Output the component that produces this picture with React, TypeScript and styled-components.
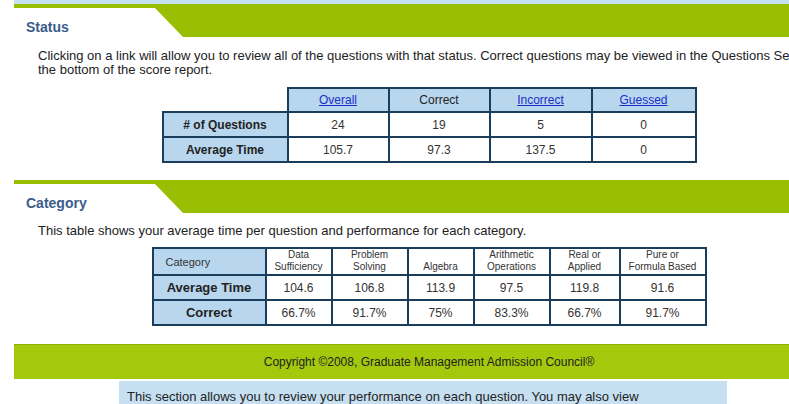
import React from "react";
import styled, { createGlobalStyle } from "styled-components";

const GREEN = "#99bf05";
const NAVY = "#1b3d5c";
const LIGHT = "#b8d6ee";

const Global = createGlobalStyle`
  html, body { margin: 0; padding: 0; background: #fff; overflow: hidden; }
  body { font-family: "Liberation Sans", Arial, sans-serif; color: #222; }
`;

const Page = styled.div`
  width: 830px;
  margin-left: 14px;
  display: flex;
  flex-direction: column;
`;

const TopStrip = styled.div`
  height: 4px;
  background: #c6e0f1;
`;

const SectionHeader = styled.div<{ $mt?: number }>`
  display: flex;
  height: 29px;
  border-top: 4px solid ${GREEN};
  margin-top: ${(p) => p.$mt ?? 0}px;
`;

const Title = styled.h2`
  width: 141px;
  margin: 0;
  padding: 11px 0 0 12px;
  box-sizing: border-box;
  font-size: 14px;
  font-weight: bold;
  color: #3b5b8c;
  line-height: 16px;
`;

const Wedge = styled.div`
  flex: 1;
  background: ${GREEN};
  clip-path: polygon(0 0, 100% 0, 100% 100%, 28px 100%);
`;

const Para = styled.p<{ $mt: number }>`
  margin: ${(p) => p.$mt}px 0 0 24px;
  font-size: 13px;
  line-height: 14px;
  color: #222;
`;

const Table = styled.table<{ $mt: number }>`
  border-collapse: collapse;
  table-layout: fixed;
  margin: ${(p) => p.$mt}px auto 0;
  font-size: 12px;
  color: #333;
`;

const Cell = styled.td<{ $bg?: string; $bold?: boolean; $none?: boolean; $h?: number }>`
  border: ${(p) => (p.$none ? "none" : `2px solid ${NAVY}`)};
  background: ${(p) => p.$bg ?? "#fff"};
  font-weight: ${(p) => (p.$bold ? "bold" : "normal")};
  text-align: center;
  vertical-align: middle;
  height: ${(p) => p.$h ?? 23}px;
  padding: 0;
  color: ${(p) => (p.$bold ? "#222" : "#333")};
`;

const Link = styled.a`
  color: #1d2fc9;
  text-decoration: underline;
`;

const CatHead = styled.td<{ $left?: boolean; $bg?: string }>`
  border: 2px solid ${NAVY};
  background: ${(p) => p.$bg ?? "#fff"};
  font-size: ${(p) => (p.$left ? 11 : 10)}px;
  line-height: 12px;
  text-align: ${(p) => (p.$left ? "left" : "center")};
  padding: ${(p) => (p.$left ? "0 0 0 12px" : "0 0 1px")};
  vertical-align: ${(p) => (p.$left ? "middle" : "bottom")};
  height: 22px;
  color: #333;
`;

const RowLabel = styled.td`
  border: 2px solid ${NAVY};
  background: ${LIGHT};
  font-size: 13px;
  font-weight: bold;
  text-align: center;
  height: 23px;
  padding: 0;
  color: #222;
`;

const Val = styled.td`
  border: 2px solid ${NAVY};
  background: #fff;
  font-size: 12px;
  text-align: center;
  height: 23px;
  padding: 0;
  color: #333;
`;

const Footer = styled.div`
  margin-top: 18px;
  height: 34px;
  background: #a4c80c;
  border-top: 1px solid #8fb000;
  display: flex;
  align-items: center;
  justify-content: center;
  font-size: 12px;
  color: #222;
`;

const Note = styled.div`
  margin: 2px 0 0 105px;
  width: 608px;
  background: #c6e0f1;
  font-size: 13px;
  padding: 8px 8px 10px;
  box-sizing: border-box;
  color: #222;
`;

const statusCols = [125, 101, 101, 102, 104];
const catCols = [113, 66, 76, 66, 76, 70, 86];

const catHeads = [
  ["Data", "Sufficiency"],
  ["Problem", "Solving"],
  ["Algebra"],
  ["Arithmetic", "Operations"],
  ["Real or", "Applied"],
  ["Pure or", "Formula Based"],
];

export default function App() {
  return (
    <>
      <Global />
      <Page>
        <TopStrip />
        <SectionHeader>
          <Title>Status</Title>
          <Wedge />
        </SectionHeader>
        <Para $mt={12}>
          Clicking on a link will allow you to review all of the questions with that status. Correct questions may be viewed in the Questions Section at
          the bottom of the score report.
        </Para>
        <Table $mt={10}>
          <colgroup>
            {statusCols.map((w, i) => (
              <col key={i} style={{ width: w }} />
            ))}
          </colgroup>
          <tbody>
            <tr>
              <Cell $none $bg="#fff" $h={22} />
              <Cell $bg={LIGHT} $h={22}><Link href="#">Overall</Link></Cell>
              <Cell $bg={LIGHT} $h={22} style={{ color: "#222" }}>Correct</Cell>
              <Cell $bg={LIGHT} $h={22}><Link href="#">Incorrect</Link></Cell>
              <Cell $bg={LIGHT} $h={22}><Link href="#">Guessed</Link></Cell>
            </tr>
            <tr>
              <Cell $bg={LIGHT} $bold># of Questions</Cell>
              <Cell>24</Cell>
              <Cell>19</Cell>
              <Cell>5</Cell>
              <Cell>0</Cell>
            </tr>
            <tr>
              <Cell $bg={LIGHT} $bold>Average Time</Cell>
              <Cell>105.7</Cell>
              <Cell>97.3</Cell>
              <Cell>137.5</Cell>
              <Cell>0</Cell>
            </tr>
          </tbody>
        </Table>
        <SectionHeader $mt={17}>
          <Title>Category</Title>
          <Wedge />
        </SectionHeader>
        <Para $mt={11}>This table shows your average time per question and performance for each category.</Para>
        <Table $mt={9}>
          <colgroup>
            {catCols.map((w, i) => (
              <col key={i} style={{ width: w }} />
            ))}
          </colgroup>
          <tbody>
            <tr>
              <CatHead $left $bg={LIGHT}>Category</CatHead>
              {catHeads.map((h, i) => (
                <CatHead key={i}>
                  {h.map((l, j) => (
                    <React.Fragment key={j}>
                      {j > 0 && <br />}
                      {l}
                    </React.Fragment>
                  ))}
                </CatHead>
              ))}
            </tr>
            <tr>
              <RowLabel>Average Time</RowLabel>
              {["104.6", "106.8", "113.9", "97.5", "119.8", "91.6"].map((v, i) => (
                <Val key={i}>{v}</Val>
              ))}
            </tr>
            <tr>
              <RowLabel>Correct</RowLabel>
              {["66.7%", "91.7%", "75%", "83.3%", "66.7%", "91.7%"].map((v, i) => (
                <Val key={i}>{v}</Val>
              ))}
            </tr>
          </tbody>
        </Table>
        <Footer>Copyright ©2008, Graduate Management Admission Council®</Footer>
        <Note>This section allows you to review your performance on each question. You may also view</Note>
      </Page>
    </>
  );
}
